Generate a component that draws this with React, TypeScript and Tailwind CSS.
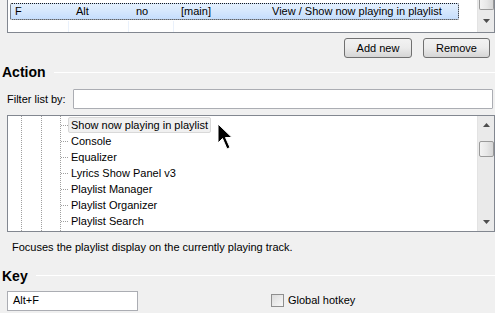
import { useState } from "react";

const treeItems = [
  "Show now playing in playlist",
  "Console",
  "Equalizer",
  "Lyrics Show Panel v3",
  "Playlist Manager",
  "Playlist Organizer",
  "Playlist Search",
];

const ScrollArrow = ({ up }: { up?: boolean }) => (
  <svg width="7" height="4" viewBox="0 0 7 4" className="block">
    {up ? <path d="M0 4 L3.5 0 L7 4 Z" fill="#4d4d4d" /> : <path d="M0 0 L7 0 L3.5 4 Z" fill="#4d4d4d" />}
  </svg>
);

const Thumb = ({ className = "" }: { className?: string }) => (
  <div
    className={`mx-auto w-[15px] rounded-[2px] border border-[#9a9a9a] bg-gradient-to-r from-[#f3f3f3] via-[#e8e8e8] to-[#d6d6d6] ${className}`}
  />
);

const SectionHeader = ({ title }: { title: string }) => (
  <div className="flex items-center gap-2 pl-[2px]">
    <span className="text-[14px] font-bold text-black leading-none">{title}</span>
    <div className="flex-1 h-px bg-[#a0a0a0] border-b border-white" />
  </div>
);

const Cursor = () => (
  <svg width="18" height="28" viewBox="0 0 18 28" className="absolute left-[217px] top-[123px]">
    <path
      d="M1 1 L1 20 L5.5 15.5 L10 26 L13 24.5 L8.5 14.5 L15 14.5 Z"
      fill="#000"
      stroke="#fff"
      strokeWidth="1"
    />
  </svg>
);

export default function App() {
  const [globalHotkey, setGlobalHotkey] = useState(false);

  return (
    <div
      className="relative w-[495px] h-[313px] overflow-hidden bg-[#f0f0f0] text-[11px] text-black"
      style={{ fontFamily: '"Liberation Sans", Arial, sans-serif' }}
    >
      {/* key bindings list (scrolled) */}
      <div className="ml-[7px] w-[488px] h-[33px] flex border-x border-b border-[#828790] bg-white">
        <div className="flex-1 relative pt-[3px] pl-[2px]">
          <div className="flex h-[17px] w-[449px] items-center rounded-[2px] border border-dotted border-[#1a1a1a] bg-gradient-to-b from-[#e4f0fd] to-[#c6defc]">
            <span className="w-[60px] pl-[4px]">F</span>
            <span className="w-[60px] pl-[5px]">Alt</span>
            <span className="w-[45px] pl-[5px]">no</span>
            <span className="w-[96px] pl-[5px]">[main]</span>
            <span>View / Show now playing in playlist</span>
          </div>
          <div className="absolute top-[21px] bottom-0 left-[60px] w-px bg-[#eaf1fb]" />
          <div className="absolute top-[21px] bottom-0 left-[120px] w-px bg-[#eaf1fb]" />
          <div className="absolute top-[21px] bottom-0 left-[165px] w-px bg-[#eaf1fb]" />
        </div>
        <div className="w-[17px] bg-[#eaeaea] border-l border-[#e3e3e3] flex flex-col">
          <Thumb className="h-[10px] rounded-t-none border-t-0" />
          <div className="flex-1 flex items-center justify-center pt-[3px]">
            <ScrollArrow />
          </div>
          <div className="h-[4px]" />
        </div>
      </div>

      {/* buttons */}
      <div className="mt-[5px] flex justify-end gap-[11px] pr-[5px]">
        <button className="h-[20px] w-[68px] rounded-[3px] border border-[#707070] bg-gradient-to-b from-[#f2f2f2] via-[#ebebeb] to-[#d5d5d5] text-[11px]">
          Add new
        </button>
        <button className="h-[20px] w-[67px] rounded-[3px] border border-[#707070] bg-gradient-to-b from-[#f2f2f2] via-[#ebebeb] to-[#d5d5d5] text-[11px]">
          Remove
        </button>
      </div>

      {/* Action */}
      <div className="mt-[7px]">
        <SectionHeader title="Action" />
      </div>

      <div className="mt-[10px] flex items-center pl-[7px] pr-[2px]">
        <span className="w-[66px]">Filter list by:</span>
        <div className="flex-1 h-[20px] border border-[#abadb3] bg-white rounded-[1px]" />
      </div>

      <div className="mt-[6px] ml-[7px] w-[488px] h-[117px] flex border border-[#828790] bg-white">
        <div className="flex-1 relative">
          <div className="absolute left-[13px] top-0 bottom-0 border-l border-dotted border-[#a0a0a0]" />
          <div className="absolute left-[33px] top-0 bottom-0 border-l border-dotted border-[#a0a0a0]" />
          <div className="absolute left-[52px] top-0 bottom-0 border-l border-dotted border-[#a0a0a0]" />
          <div className="pt-[1px] flex flex-col">
            {treeItems.map((item, i) => (
              <div key={item} className="h-[16px] flex items-center">
                <div className="ml-[53px] w-[7px] border-t border-dotted border-[#a0a0a0]" />
                <span
                  className={
                    i === 0
                      ? "px-[2px] h-[16px] leading-[14px] rounded-[2px] border border-[#d9d9d9] bg-[#f0f0f0]"
                      : "ml-[3px]"
                  }
                >
                  {item}
                </span>
              </div>
            ))}
          </div>
        </div>
        <div className="w-[17px] bg-[#eaeaea] border-l border-[#e3e3e3] flex flex-col items-center py-[7px]">
          <ScrollArrow up />
          <Thumb className="mt-[14px] h-[16px]" />
          <div className="flex-1" />
          <ScrollArrow />
        </div>
      </div>

      <div className="mt-[7px] pl-[12px]">Focuses the playlist display on the currently playing track.</div>

      {/* Key */}
      <div className="mt-[13px]">
        <SectionHeader title="Key" />
      </div>

      <div className="mt-[8px] flex items-center pl-[7px]">
        <div className="w-[131px] h-[20px] border border-[#abadb3] bg-white flex items-center pl-[5px]">Alt+F</div>
        <label className="ml-[133px] flex items-center gap-[4px]">
          <input
            type="checkbox"
            checked={globalHotkey}
            onChange={(e) => setGlobalHotkey(e.target.checked)}
            className="appearance-none w-[13px] h-[13px] border border-[#8f8f8f] bg-gradient-to-br from-[#dcdcdc] to-[#f8f8f8] m-0"
          />
          <span>Global hotkey</span>
        </label>
      </div>

      <Cursor />
    </div>
  );
}
